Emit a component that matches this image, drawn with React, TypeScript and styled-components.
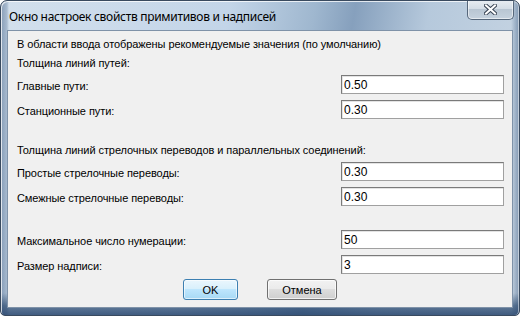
import styled, { createGlobalStyle } from 'styled-components';

const GlobalStyle = createGlobalStyle`
  html, body {
    margin: 0;
    padding: 0;
    background: #ffffff;
  }
  * {
    box-sizing: border-box;
  }
`;

const Window = styled.div`
  width: 520px;
  height: 316px;
  display: flex;
  flex-direction: column;
  border: 1px solid #394a5f;
  border-radius: 7px 7px 5px 5px;
  overflow: hidden;
  background:
    linear-gradient(to bottom, rgba(255, 255, 255, 0) 0, rgba(255, 255, 255, 0) 93%, rgba(28, 60, 100, 0.6) 97%, rgba(40, 70, 110, 0.85) 100%),
    linear-gradient(to right, rgba(45, 78, 120, 0.45) 0, rgba(45, 78, 120, 0.25) 6px, rgba(45, 78, 120, 0) 8px, rgba(45, 78, 120, 0) 510px, rgba(45, 78, 120, 0.45) 100%),
    linear-gradient(100deg, #d3e0ed 0%, #c3d5e8 40%, #9fb7cf 55%, #86a0bd 62%, #b6c9dc 75%, #cad7e4 100%);
  box-shadow: inset 1px 1px 0 rgba(255, 255, 255, 0.75), inset -1px 0 0 rgba(255, 255, 255, 0.5);
`;

const TitleBar = styled.div`
  height: 29px;
  flex: none;
  display: flex;
  align-items: flex-start;
  justify-content: space-between;
  padding-left: 8px;
`;

const Title = styled.span`
  font-family: 'Noto Sans', 'Liberation Sans', sans-serif;
  font-size: 12px;
  line-height: 14px;
  margin-top: 9px;
  color: #000;
  letter-spacing: -0.3px;
`;

const CloseButton = styled.button`
  width: 47px;
  height: 20px;
  margin-top: -1px;
  margin-right: 5px;
  padding: 0;
  display: flex;
  align-items: center;
  justify-content: center;
  border: 1px solid #56677b;
  border-top: none;
  border-radius: 0 0 5px 5px;
  background: linear-gradient(to bottom, #e9eef3 0%, #d5dee7 45%, #b9c6d3 50%, #c6d2de 100%);
  box-shadow: inset 0 0 0 1px rgba(255, 255, 255, 0.55);
`;

const Client = styled.div`
  flex: 1;
  margin: 0 6px 7px 6px;
  border: 1px solid #7f92a8;
  background: #f0f0f0;
  padding: 3px 8px 0 9px;
  display: flex;
  flex-direction: column;
  font-family: 'Liberation Sans', Arial, sans-serif;
  font-size: 11px;
  letter-spacing: -0.08px;
  color: #000;
`;

const TextRow = styled.div`
  height: 19px;
  display: flex;
  align-items: center;
`;

const FieldRow = styled.div`
  height: 25px;
  display: grid;
  grid-template-columns: 1fr 163px;
  align-items: center;
`;

const Label = styled.span`
  padding-top: 2px;
`;

const Spacer = styled.div<{ $h: number }>`
  height: ${(p) => p.$h}px;
  flex: none;
`;

const Input = styled.input`
  height: 19px;
  width: 163px;
  margin: 0;
  padding: 1px 2px 0 2px;
  border: 1px solid #7a7a7a;
  border-right-color: #a0a0a0;
  border-bottom-color: #a0a0a0;
  box-shadow: inset 1px 1px 0 #e3e3e3;
  background: #fff;
  font-family: 'Liberation Sans', Arial, sans-serif;
  font-size: 12px;
  color: #000;
  outline: none;
`;

const ButtonRow = styled.div`
  display: flex;
  justify-content: center;
  gap: 29px;
  margin-top: 2px;
  padding-right: 1px;
`;

const Button = styled.button<{ $default?: boolean; $w: number }>`
  width: ${(p) => p.$w}px;
  height: 21px;
  padding: 0;
  font-family: 'Liberation Sans', Arial, sans-serif;
  font-size: 11px;
  color: #000;
  border-radius: 3px;
  border: 1px solid ${(p) => (p.$default ? '#3c7fb1' : '#707070')};
  background: ${(p) =>
    p.$default
      ? 'linear-gradient(to bottom, #eaf6fd 0%, #d9f0fc 45%, #bee6fd 50%, #a7d9f5 100%)'
      : 'linear-gradient(to bottom, #f2f2f2 0%, #ebebeb 45%, #dddddd 50%, #cfcfcf 100%)'};
  box-shadow: inset 0 0 0 1px ${(p) => (p.$default ? 'rgba(255,255,255,0.6)' : 'rgba(255,255,255,0.7)')};
`;

const fields = [
  { label: 'Главные пути:', value: '0.50' },
  { label: 'Станционные пути:', value: '0.30' },
];

const switchFields = [
  { label: 'Простые стрелочные переводы:', value: '0.30' },
  { label: 'Смежные стрелочные переводы:', value: '0.30' },
];

const miscFields = [
  { label: 'Максимальное число нумерации:', value: '50' },
  { label: 'Размер надписи:', value: '3' },
];

function Field({ label, value }: { label: string; value: string }) {
  return (
    <FieldRow>
      <Label>{label}</Label>
      <Input defaultValue={value} />
    </FieldRow>
  );
}

export default function App() {
  return (
    <>
      <GlobalStyle />
      <Window>
        <TitleBar>
          <Title>Окно настроек свойств примитивов и надписей</Title>
          <CloseButton aria-label="Закрыть">
            <svg width="13" height="11" viewBox="0 0 13 11">
              <path d="M2 1.5 L11 9.5 M11 1.5 L2 9.5" stroke="#3b4656" strokeWidth="4" strokeLinecap="square" />
              <path d="M2 1.5 L11 9.5 M11 1.5 L2 9.5" stroke="#ffffff" strokeWidth="2" strokeLinecap="square" />
            </svg>
          </CloseButton>
        </TitleBar>
        <Client>
          <TextRow>В области ввода отображены рекомендуемые значения (по умолчанию)</TextRow>
          <TextRow>Толщина линий путей:</TextRow>
          {fields.map((f) => (
            <Field key={f.label} {...f} />
          ))}
          <Spacer $h={18} />
          <TextRow>Толщина линий стрелочных переводов и параллельных соединений:</TextRow>
          {switchFields.map((f) => (
            <Field key={f.label} {...f} />
          ))}
          <Spacer $h={18} />
          {miscFields.map((f) => (
            <Field key={f.label} {...f} />
          ))}
          <ButtonRow>
            <Button $default $w={55}>OK</Button>
            <Button $w={70}>Отмена</Button>
          </ButtonRow>
        </Client>
      </Window>
    </>
  );
}
